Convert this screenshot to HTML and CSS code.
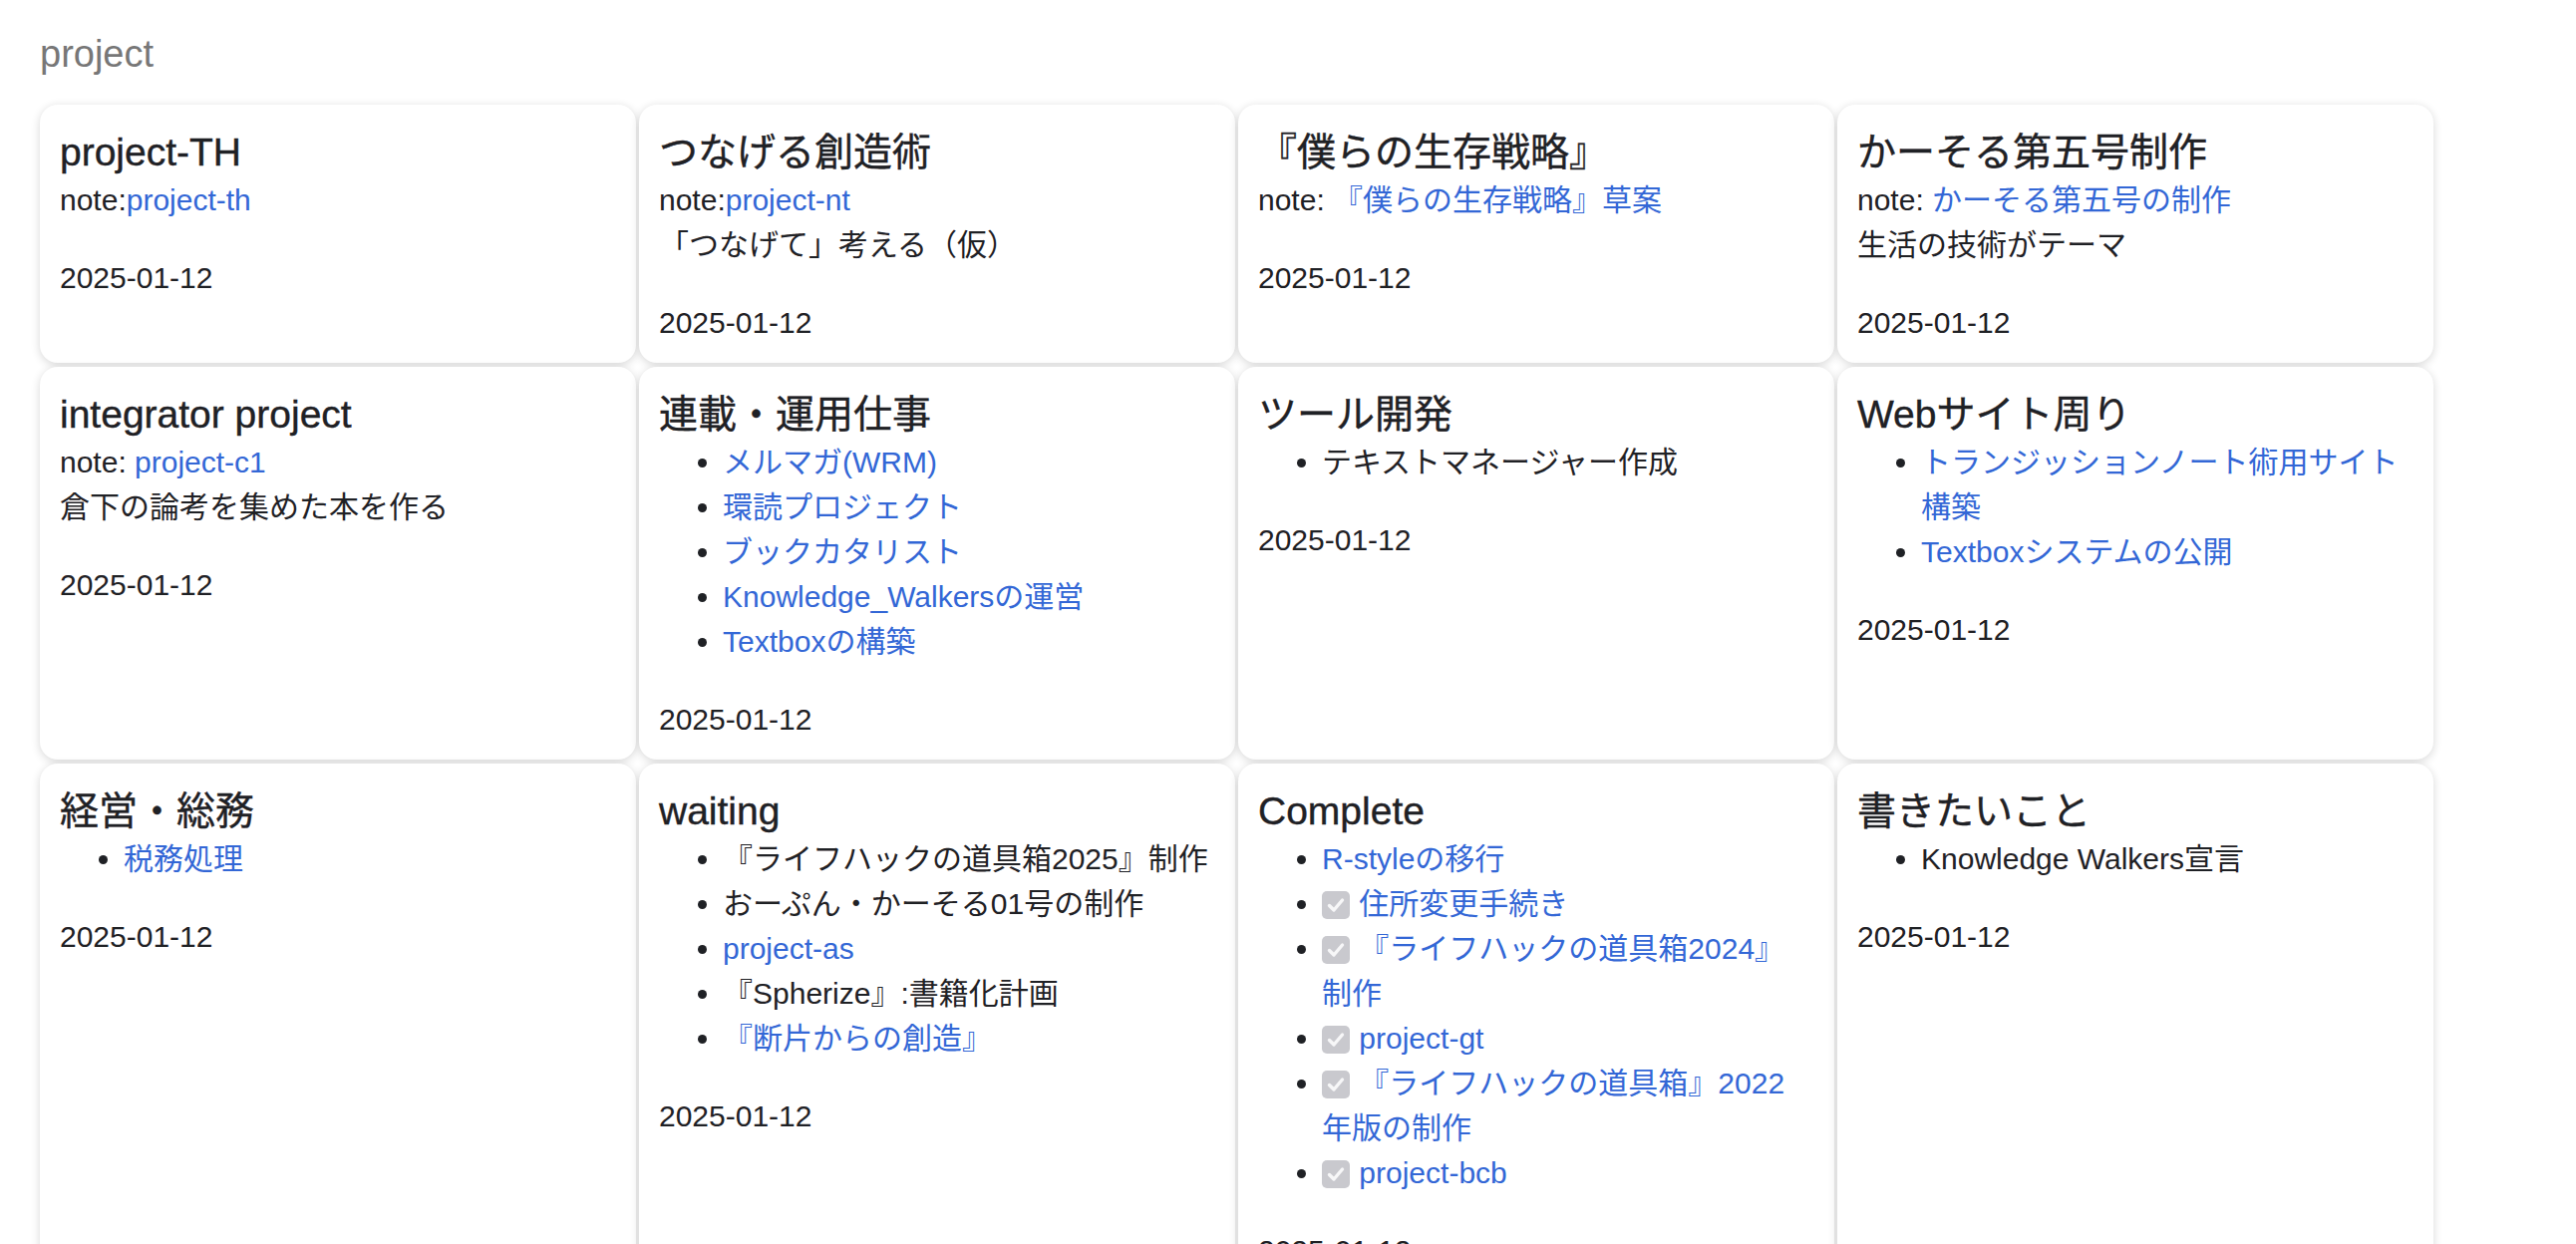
FILE: index.html
```html
<!DOCTYPE html>
<html lang="ja">
<head>
<meta charset="utf-8">
<title>project</title>
<link rel="stylesheet" href="styles.css">
</head>
<body>
<div class="page-title">project</div>
<div class="board">

  <section class="card">
    <h3 class="card-title">project-TH</h3>
    <p class="card-text">note:<a href="#">project-th</a></p>
    <p class="card-date">2025-01-12</p>
  </section>

  <section class="card">
    <h3 class="card-title">つなげる創造術</h3>
    <p class="card-text">note:<a href="#">project-nt</a><br>「つなげて」考える（仮）</p>
    <p class="card-date">2025-01-12</p>
  </section>

  <section class="card">
    <h3 class="card-title">『僕らの生存戦略』</h3>
    <p class="card-text">note: <a href="#">『僕らの生存戦略』草案</a></p>
    <p class="card-date">2025-01-12</p>
  </section>

  <section class="card">
    <h3 class="card-title">かーそる第五号制作</h3>
    <p class="card-text">note: <a href="#">かーそる第五号の制作</a><br>生活の技術がテーマ</p>
    <p class="card-date">2025-01-12</p>
  </section>

  <section class="card">
    <h3 class="card-title">integrator project</h3>
    <p class="card-text">note: <a href="#">project-c1</a><br>倉下の論考を集めた本を作る</p>
    <p class="card-date">2025-01-12</p>
  </section>

  <section class="card">
    <h3 class="card-title">連載・運用仕事</h3>
    <ul class="card-list">
      <li><a href="#">メルマガ(WRM)</a></li>
      <li><a href="#">環読プロジェクト</a></li>
      <li><a href="#">ブックカタリスト</a></li>
      <li><a href="#">Knowledge_Walkersの運営</a></li>
      <li><a href="#">Textboxの構築</a></li>
    </ul>
    <p class="card-date">2025-01-12</p>
  </section>

  <section class="card">
    <h3 class="card-title">ツール開発</h3>
    <ul class="card-list">
      <li>テキストマネージャー作成</li>
    </ul>
    <p class="card-date">2025-01-12</p>
  </section>

  <section class="card">
    <h3 class="card-title">Webサイト周り</h3>
    <ul class="card-list">
      <li><a href="#">トランジッションノート術用サイト構築</a></li>
      <li><a href="#">Textboxシステムの公開</a></li>
    </ul>
    <p class="card-date">2025-01-12</p>
  </section>

  <section class="card">
    <h3 class="card-title">経営・総務</h3>
    <ul class="card-list">
      <li><a href="#">税務処理</a></li>
    </ul>
    <p class="card-date">2025-01-12</p>
  </section>

  <section class="card">
    <h3 class="card-title">waiting</h3>
    <ul class="card-list">
      <li>『ライフハックの道具箱2025』制作</li>
      <li>おーぷん・かーそる01号の制作</li>
      <li><a href="#">project-as</a></li>
      <li>『Spherize』:書籍化計画</li>
      <li><a href="#">『断片からの創造』</a></li>
    </ul>
    <p class="card-date">2025-01-12</p>
  </section>

  <section class="card">
    <h3 class="card-title">Complete</h3>
    <ul class="card-list">
      <li><a href="#">R-styleの移行</a></li>
      <li><span class="check"><svg viewBox="0 0 28 28" width="28" height="28"><polyline points="7.5,14.5 12,19 20.5,9" fill="none" stroke="#f7f7f8" stroke-width="3.4" stroke-linecap="round" stroke-linejoin="round"/></svg></span> <a href="#">住所変更手続き</a></li>
      <li><span class="check"><svg viewBox="0 0 28 28" width="28" height="28"><polyline points="7.5,14.5 12,19 20.5,9" fill="none" stroke="#f7f7f8" stroke-width="3.4" stroke-linecap="round" stroke-linejoin="round"/></svg></span> <a href="#">『ライフハックの道具箱2024』制作</a></li>
      <li><span class="check"><svg viewBox="0 0 28 28" width="28" height="28"><polyline points="7.5,14.5 12,19 20.5,9" fill="none" stroke="#f7f7f8" stroke-width="3.4" stroke-linecap="round" stroke-linejoin="round"/></svg></span> <a href="#">project-gt</a></li>
      <li><span class="check"><svg viewBox="0 0 28 28" width="28" height="28"><polyline points="7.5,14.5 12,19 20.5,9" fill="none" stroke="#f7f7f8" stroke-width="3.4" stroke-linecap="round" stroke-linejoin="round"/></svg></span> <a href="#">『ライフハックの道具箱』2022年版の制作</a></li>
      <li><span class="check"><svg viewBox="0 0 28 28" width="28" height="28"><polyline points="7.5,14.5 12,19 20.5,9" fill="none" stroke="#f7f7f8" stroke-width="3.4" stroke-linecap="round" stroke-linejoin="round"/></svg></span> <a href="#">project-bcb</a></li>
    </ul>
    <p class="card-date">2025-01-12</p>
  </section>

  <section class="card">
    <h3 class="card-title">書きたいこと</h3>
    <ul class="card-list">
      <li>Knowledge Walkers宣言</li>
    </ul>
    <p class="card-date">2025-01-12</p>
  </section>

</div>
</body>
</html>
```

FILE: styles.css
```css
html, body {
  background: #ffffff;
}

body {
  margin: 0;
  padding: 31px 40px 40px;
  font-family: "Liberation Sans", "Noto Sans CJK JP", sans-serif;
  color: #1f2125;
}

.page-title {
  font-size: 38px;
  line-height: 46px;
  color: #777777;
  margin: 0 0 28px;
}

.board {
  display: grid;
  grid-template-columns: repeat(4, 598px);
  column-gap: 3px;
  row-gap: 4px;
}

.card {
  background: #ffffff;
  border-radius: 18px;
  box-shadow: 0 2px 10px rgba(0, 0, 0, 0.16);
  padding: 25px 20px 18px;
  font-size: 30px;
  line-height: 45px;
}

.card-title {
  font-size: 39px;
  line-height: 46px;
  font-weight: 400;
  -webkit-text-stroke: 0.4px #1f2125;
  margin: 0 0 2px;
  color: #1f2125;
}

.card-text {
  margin: 0;
}

.card-list {
  margin: 0;
  padding-left: 64px;
}

.card-date {
  margin: 33px 0 0;
}

a {
  color: #3367d6;
  text-decoration: none;
}

.check {
  display: inline-block;
  width: 28px;
  height: 28px;
  border-radius: 5px;
  background: #c9c9ce;
  vertical-align: -5px;
  margin-right: 1px;
}

.check svg {
  display: block;
}
```
